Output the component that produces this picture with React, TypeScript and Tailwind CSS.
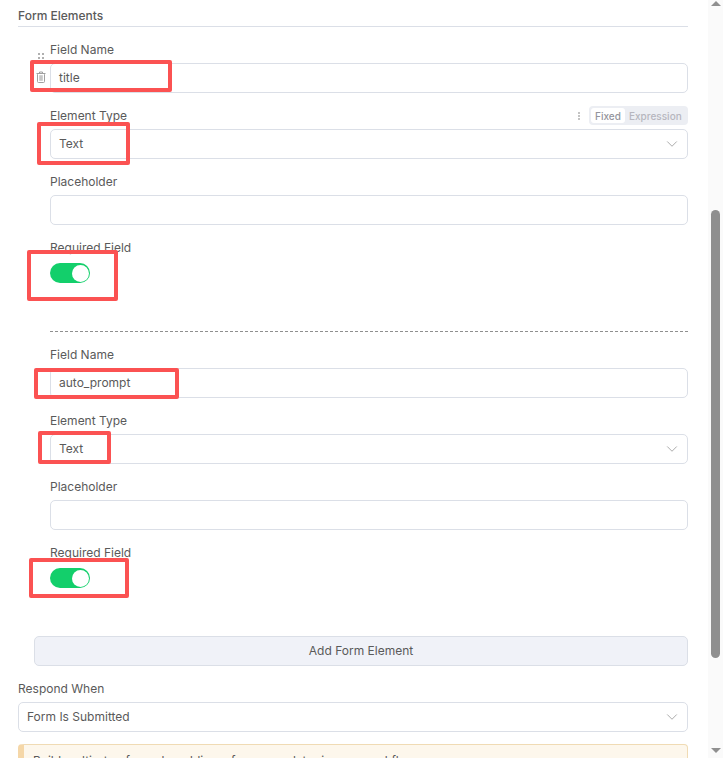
import React from 'react';
import { ChevronDown } from 'lucide-react';

const inputBox =
  'h-[30px] w-full rounded-[5px] border border-[#dbdfe7] bg-white px-2 flex items-center text-[12px] text-[#5a5a5a]';

function Label({ children, className = '' }: { children: React.ReactNode; className?: string }) {
  return <div className={`h-[19px] pt-[1px] leading-[18px] text-[12px] text-[#5a5a5a] ${className}`}>{children}</div>;
}

function SelectBox({ value }: { value: string }) {
  return (
    <div className={`${inputBox} justify-between`}>
      <span>{value}</span>
      <ChevronDown size={18} strokeWidth={1} className="text-[#8f8f8f] -mr-[2px]" />
    </div>
  );
}

function ParamOptions() {
  return (
    <div className="flex items-center">
      <div className="flex flex-col gap-[1px] mr-[9px]">
        <span className="w-[2px] h-[2px] bg-[#c4c4c4]" />
        <span className="w-[2px] h-[2px] bg-[#c4c4c4]" />
        <span className="w-[2px] h-[2px] bg-[#c4c4c4]" />
      </div>
      <div className="flex items-center h-[19px] w-[99px] rounded-[4px] bg-[#eceef3] p-[2px] text-[10px] font-medium leading-[17px]">
        <span className="h-[15px] w-[34px] rounded-[3px] bg-white text-[#94949c] flex items-center justify-center pt-[1px]">Fixed</span>
        <span className="ml-[4px] pt-[1px] text-[#b6b6be]">Expression</span>
      </div>
    </div>
  );
}

function Toggle() {
  return (
    <div className="h-[20px] w-[40px] rounded-full bg-[#13cf6b] flex items-center justify-end pr-[1px]">
      <span className="h-[17px] w-[17px] rounded-full bg-white" />
    </div>
  );
}

function FormElement({ first }: { first?: boolean }) {
  return (
    <div className="relative">
      {first && (
        <>
          <div className="absolute left-[-12px] top-[13px] grid grid-cols-2 gap-x-[2px] gap-y-[2px]">
            {[0, 1, 2, 3].map((i) => (
              <span key={i} className="w-[2px] h-[2px] bg-[#b0b0b0]" />
            ))}
          </div>
          <svg
            viewBox="0 0 10 12"
            className="absolute left-[-14px] top-[31px] h-[12px] w-[10px] text-[#a0a0a0]"
            fill="none"
            stroke="currentColor"
          >
            <path d="M0.5 2.5h9M3.5 2.5V1h3v1.5" strokeWidth="1" />
            <rect x="1.5" y="2.5" width="7" height="9" rx="1" strokeWidth="1" />
            <rect x="3.2" y="4.2" width="3.6" height="5.6" fill="currentColor" stroke="none" opacity="0.6" />
          </svg>
        </>
      )}
      <Label className="mb-[4px]">Field Name</Label>
      <div className={`${inputBox} mb-[13px]`}>{first ? 'title' : 'auto_prompt'}</div>
      <div className="flex items-end justify-between mb-[4px] h-[19px]">
        <Label>Element Type</Label>
        {first && <ParamOptions />}
      </div>
      <div className="mb-[13px]">
        <SelectBox value="Text" />
      </div>
      <Label className="mb-[4px]">Placeholder</Label>
      <div className={`${inputBox} mb-[13px]`} />
      <Label className="mb-[6px]">Required Field</Label>
      <Toggle />
    </div>
  );
}

function Scrollbar() {
  return (
    <div className="w-[15px] h-[758px] bg-[#fafafa] flex flex-col items-center shrink-0">
      <div className="mt-[1px] w-0 h-0 border-x-[5px] border-x-transparent border-b-[5px] border-b-[#8f8f8f]" />
      <div className="mt-[204px] w-[9px] h-[448px] rounded-full bg-[#8f8f8f]" />
      <div className="mt-[90px] w-0 h-0 border-x-[5px] border-x-transparent border-t-[5px] border-t-[#8f8f8f]" />
    </div>
  );
}

// red marker boxes drawn on top of the screenshot
const markers = [
  'left-[30px] top-[60px] w-[142px] h-[32px]',
  'left-[37px] top-[122px] w-[93px] h-[43px]',
  'left-[27px] top-[250px] w-[91px] h-[51px]',
  'left-[34px] top-[368px] w-[145px] h-[31px]',
  'left-[38px] top-[431px] w-[73px] h-[33px]',
  'left-[29px] top-[558px] w-[100px] h-[40px]',
];

export default function App() {
  return (
    <div className="relative h-[758px] w-[723px] overflow-hidden bg-white flex font-['Inter',sans-serif]">
      <div className="w-[708px] pl-[18px] pr-[20px] shrink-0">
        <div className="h-[27px] border-b border-[#dbdfe7] text-[12px] font-medium text-[#5a5a5a] leading-[18px] pt-[7px]">
          Form Elements
        </div>
        <div className="pl-[32px] pt-[13px]">
          <FormElement first />
          <div className="border-t border-dashed border-[#8f8f8f] mt-[48px] mb-[13px]" />
          <FormElement />
        </div>
        <div className="ml-[16px] mt-[48px] mb-[13px] h-[30px] rounded-[5px] border border-[#dbdfe7] bg-[#f0f2f8] flex items-center justify-center text-[12px] text-[#5a5a5a]">
          Add Form Element
        </div>
        <Label className="mb-[4px]">Respond When</Label>
        <SelectBox value="Form Is Submitted" />
        <div className="mt-[12px] h-[60px] rounded-[4px] border border-[#f0dbb4] border-l-[6px] border-l-[#f5d7a8] bg-[#fdf7ec] pl-[9px] pt-[7px] text-[12px] text-[#5a5a5a] leading-[18px]">
          Build multi-step forms by adding a form page later in your workflow
        </div>
      </div>
      <div className="w-[0px] grow" />
      <Scrollbar />
      {markers.map((m) => (
        <div key={m} className={`absolute rounded-[2px] border-[4px] border-[#fb5252] ${m}`} />
      ))}
    </div>
  );
}
